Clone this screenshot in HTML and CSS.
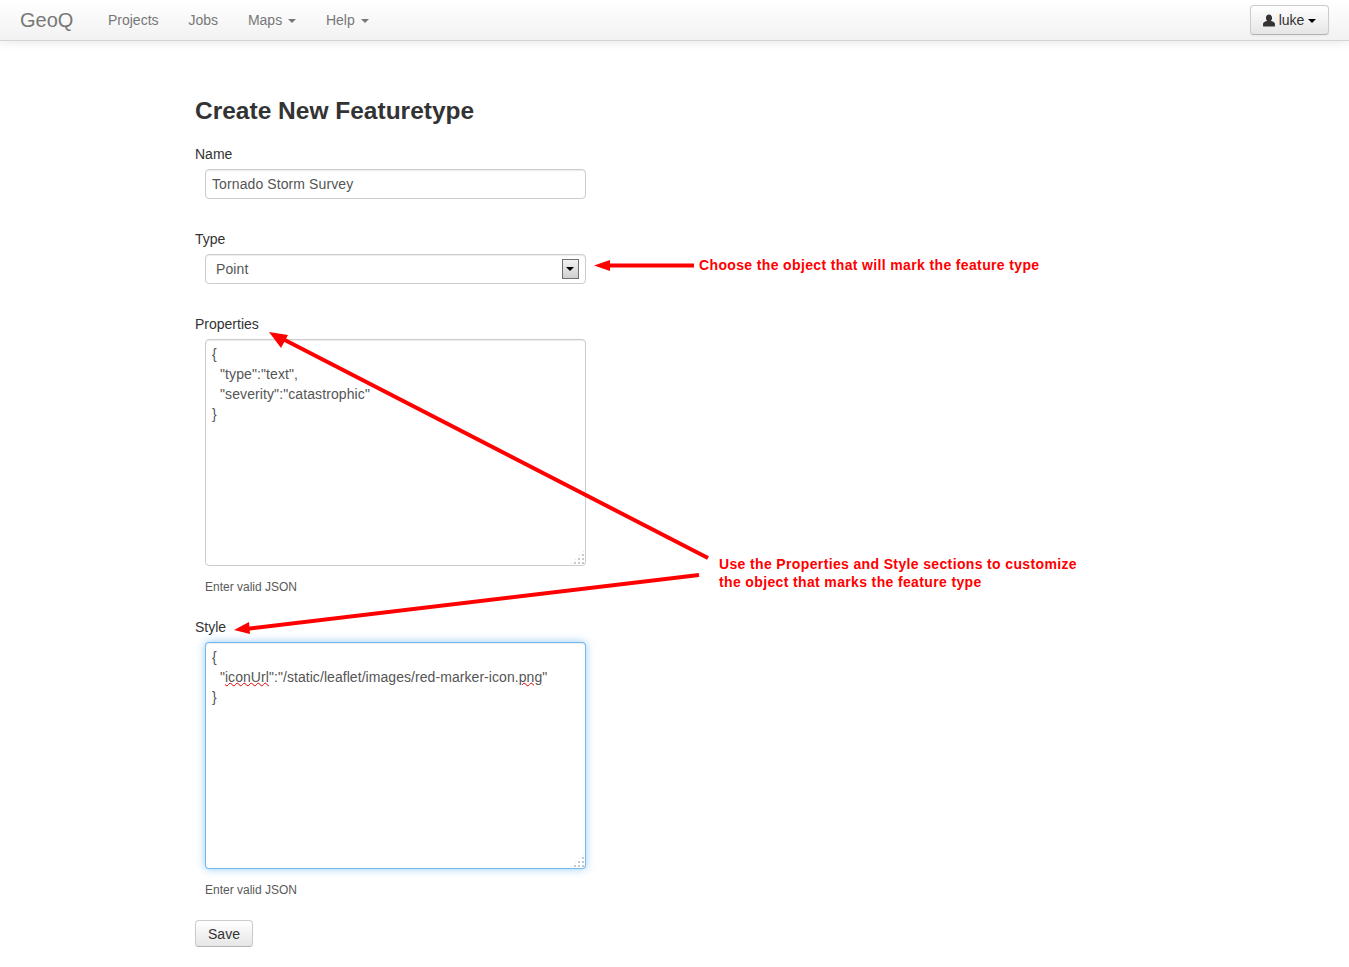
FILE: index.html
```html
<!DOCTYPE html>
<html lang="en">

<head>
    <meta charset="UTF-8">
    <title>GeoQ - Create New Featuretype</title>
    <link rel="stylesheet" href="styles.css">
</head>

<body>
    <header class="navbar">
        <a class="brand" href="#">GeoQ</a>
        <nav class="nav-links">
            <a href="#">Projects</a>
            <a href="#">Jobs</a>
            <a href="#">Maps <span class="caret"></span></a>
            <a href="#">Help <span class="caret"></span></a>
        </nav>
        <button class="btn user-btn">
            <svg class="user-icon" viewBox="0.5 0 11 12" width="12" height="13">
                <path d="M6 0.5c1.7 0 2.8 1.3 2.8 3.1 0 1.2-.5 2.2-1.2 2.8 1.800.3 3.900 1 3.900 2.600v2c0 .4-.3.6-.7.6H1.200c-.4 0-.7-.2-.7-.6V9c0-1.600 2.100-2.300 3.900-2.600-.7-.6-1.200-1.600-1.200-2.800C3.200 1.800 4.300.5 6 .5z" fill="#333"/>
            </svg>
            luke <span class="caret dark"></span>
        </button>
    </header>

    <main class="container">
        <h1>Create New Featuretype</h1>

        <form>
            <div class="field-group">
                <label>Name</label>
                <input class="text-input" type="text" value="Tornado Storm Survey">
            </div>

            <div class="field-group">
                <label>Type</label>
                <div class="select-box">
                    <span>Point</span>
                    <span class="select-arrow"></span>
                </div>
            </div>

            <div class="field-group">
                <label>Properties</label>
                <div class="text-area"><pre>{
  "type":"text",
  "severity":"catastrophic"
}</pre><span class="grip"></span></div>
                <p class="help">Enter valid JSON</p>
            </div>

            <div class="field-group">
                <label>Style</label>
                <div class="text-area focused"><pre>{
  "<span class="typo">iconUrl</span>":"/static/leaflet/images/red-marker-icon.<span class="typo">png</span>"
}</pre><span class="grip"></span></div>
                <p class="help">Enter valid JSON</p>
            </div>

            <button class="btn save-btn" type="button">Save</button>
        </form>
    </main>

    <!-- Red annotations drawn on top of the form -->
    <svg class="arrows" width="1349" height="967" viewBox="0 0 1349 967">
        <g stroke="#f00" stroke-width="4" fill="none">
            <path d="M694 265.500H606"/>
            <path d="M708 558L279 337"/>
            <path d="M699 575L246 629"/>
        </g>
        <g fill="#f00">
            <path d="M594 265.500L610 260V271Z"/>
            <path d="M269 332L288 335L281 348Z"/>
            <path d="M234 630L249 622L250 634Z"/>
        </g>
    </svg>
    <p class="note note-type">Choose the object that will mark the feature type</p>
    <p class="note note-props">Use the Properties and Style sections to customize<br>the object that marks the feature type</p>
</body>

</html>
```

FILE: styles.css
```css
body {
    font-family: 'Liberation Sans', Arial, sans-serif;
    font-size: 14px;
    line-height: 20px;
    margin: 0;
    padding: 0;
    color: #333;
    background-color: white;
}

/* Top navbar */
.navbar {
    display: flex;
    align-items: center;
    height: 40px;
    padding: 0 20px;
    background: linear-gradient(to bottom, #ffffff, #f2f2f2);
    border-bottom: 1px solid #d4d4d4;
    box-shadow: 0 1px 10px rgba(0, 0, 0, 0.1);
}

.brand {
    font-size: 20px;
    color: #777;
    text-decoration: none;
    margin-right: 20px;
}

.nav-links {
    display: flex;
    gap: 29.9px;
    margin-left: 14.6px;
}

.nav-links a {
    color: #777;
    text-decoration: none;
}

.caret {
    display: inline-block;
    width: 0;
    height: 0;
    margin-left: 2px;
    vertical-align: middle;
    border-top: 4px solid #777;
    border-left: 4px solid transparent;
    border-right: 4px solid transparent;
}

.caret.dark {
    border-top-color: #000;
    margin-left: 0;
}

.btn {
    font-family: inherit;
    font-size: 14px;
    line-height: 20px;
    color: #333;
    padding: 3px 12px;
    background: linear-gradient(to bottom, #ffffff, #e6e6e6);
    border: 1px solid #ccc;
    border-bottom-color: #b3b3b3;
    border-radius: 4px;
    box-shadow: inset 0 1px 0 rgba(255, 255, 255, 0.2), 0 1px 2px rgba(0, 0, 0, 0.05);
}

.user-btn {
    margin-left: auto;
    height: 30px;
    width: 79px;
    padding: 0;
}

.user-icon {
    vertical-align: -2px;
}

/* Form */
.container {
    width: 959px;
    margin: 0 auto;
    padding-top: 55px;
}

h1 {
    font-size: 24.5px;
    line-height: 30px;
    margin: 0 0 18px;
}

.field-group {
    margin-bottom: 30px;
}

.field-group label {
    display: block;
    margin-bottom: 5px;
}

.text-input,
.select-box,
.text-area {
    box-sizing: border-box;
    display: block;
    width: 381px;
    margin-left: 10px;
    background-color: white;
    border: 1px solid #ccc;
    border-radius: 4px;
    color: #555;
    font-family: inherit;
    font-size: 14px;
    letter-spacing: 0.1px;
    box-shadow: inset 0 1px 1px rgba(0, 0, 0, 0.075);
}

.text-input {
    height: 30px;
    padding: 4px 6px;
}

.select-box {
    display: flex;
    align-items: center;
    justify-content: space-between;
    height: 30px;
    padding: 0 6px 0 10px;
}

.select-arrow {
    box-sizing: border-box;
    position: relative;
    width: 17px;
    height: 20px;
    background: linear-gradient(to bottom, #f2f2f2, #cfcfcf);
    border: 1px solid #707070;
}

.select-arrow::after {
    content: '';
    position: absolute;
    top: 7px;
    left: 3px;
    border-top: 4px solid #000;
    border-left: 4px solid transparent;
    border-right: 4px solid transparent;
}

.text-area {
    position: relative;
    height: 227px;
    padding: 4px 6px;
}

.text-area pre {
    margin: 0;
    font-family: inherit;
    font-size: 14px;
    line-height: 20px;
}

.text-area.focused {
    letter-spacing: 0.06px;
    border-color: rgba(82, 168, 236, 0.8);
    box-shadow: inset 0 1px 1px rgba(0, 0, 0, 0.075), 0 0 8px rgba(82, 168, 236, 0.6);
}

.typo {
    text-decoration: underline wavy #e00000 1px;
    text-underline-offset: 0;
}

.grip {
    position: absolute;
    right: 0;
    bottom: 0;
    width: 15px;
    height: 15px;
    background-image: radial-gradient(circle, #c8c8c8 1.4px, transparent 1.5px);
    background-size: 4px 4px;
    background-position: right bottom;
    clip-path: polygon(100% 0, 100% 100%, 0 100%);
}

.help {
    font-size: 12px;
    color: #595959;
    margin: 11px 0 -10px 10px;
}

.save-btn {
    display: block;
    width: 58px;
    height: 27px;
    padding: 0;
}

/* Annotations */
.arrows {
    position: absolute;
    top: 0;
    left: 0;
}

.note {
    position: absolute;
    margin: 0;
    color: #f00;
    font-weight: bold;
    font-size: 14px;
    line-height: 18px;
    letter-spacing: 0.36px;
    white-space: nowrap;
}

.note-type {
    top: 256px;
    left: 699px;
}

.note-props {
    top: 555px;
    left: 719px;
}
```
